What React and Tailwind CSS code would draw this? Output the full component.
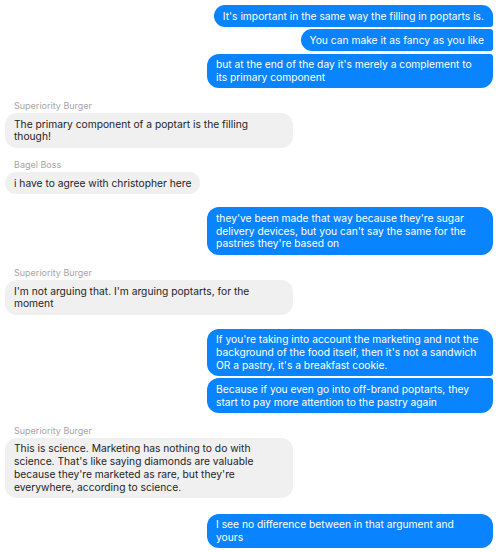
import React from "react";

const font = { fontFamily: "Inter, 'Noto Sans', sans-serif" };

function Lines({ lines }) {
  return lines.map((l, i) => (
    <React.Fragment key={i}>
      {i > 0 && <br />}
      {l}
    </React.Fragment>
  ));
}

function Sent({ lines, pos = "single" }) {
  const r =
    pos === "first"
      ? "rounded-[12px] rounded-br-[3px]"
      : pos === "middle"
      ? "rounded-[12px] rounded-r-[3px]"
      : pos === "last"
      ? "rounded-[12px] rounded-tr-[3px]"
      : "rounded-[12px]";
  const w = lines.length > 1 ? "w-[286px]" : "w-fit";
  return (
    <div className={`self-end ${w} bg-[#0a84fe] text-white px-[9px] py-[4.5px] text-[10.25px] leading-[12.75px] ${r}`}>
      <Lines lines={lines} />
    </div>
  );
}

function Received({ name, lines }) {
  const w = lines.length > 1 ? "w-[288px]" : "w-fit";
  return (
    <div className="flex flex-col items-start">
      <div className="ml-[9px] text-[9px] leading-[11px] text-[#a6a6a6] mb-[2px]">{name}</div>
      <div className={`${w} bg-[#f0f0f0] text-[#1e1e1e] px-[9px] py-[4.5px] text-[10.25px] leading-[12.75px] rounded-[12px]`}>
        <Lines lines={lines} />
      </div>
    </div>
  );
}

export default function App() {
  return (
    <div className="w-[500px] h-[552px] bg-white overflow-hidden" style={font}>
      <div className="flex flex-col pl-[5px] pr-[7px] pt-[5px]">
        <div className="flex flex-col gap-[2.5px]">
          <Sent pos="first" lines={["It's important in the same way the filling in poptarts is."]} />
          <Sent pos="middle" lines={["You can make it as fancy as you like"]} />
          <Sent pos="last" lines={["but at the end of the day it's merely a complement to", "its primary component"]} />
        </div>
        <div className="mt-[12px]">
          <Received name="Superiority Burger" lines={["The primary component of a poptart is the filling", "though!"]} />
        </div>
        <div className="mt-[11.5px]">
          <Received name="Bagel Boss" lines={["i have to agree with christopher here"]} />
        </div>
        <div className="mt-[13.5px] flex flex-col">
          <Sent lines={["they've been made that way because they're sugar", "delivery devices, but you can't say the same for the", "pastries they're based on"]} />
        </div>
        <div className="mt-[12.5px]">
          <Received name="Superiority Burger" lines={["I'm not arguing that. I'm arguing poptarts, for the", "moment"]} />
        </div>
        <div className="mt-[14px] flex flex-col gap-[2.5px]">
          <Sent pos="first" lines={["If you're taking into account the marketing and not the", "background of the food itself, then it's not a sandwich", "OR a pastry, it's a breakfast cookie."]} />
          <Sent pos="last" lines={["Because if you even go into off-brand poptarts, they", "start to pay more attention to the pastry again"]} />
        </div>
        <div className="mt-[12px]">
          <Received name="Superiority Burger" lines={["This is science. Marketing has nothing to do with", "science. That's like saying diamonds are valuable", "because they're marketed as rare, but they're", "everywhere, according to science."]} />
        </div>
        <div className="mt-[16px] flex flex-col">
          <Sent lines={["I see no difference between in that argument and", "yours"]} />
        </div>
      </div>
    </div>
  );
}
